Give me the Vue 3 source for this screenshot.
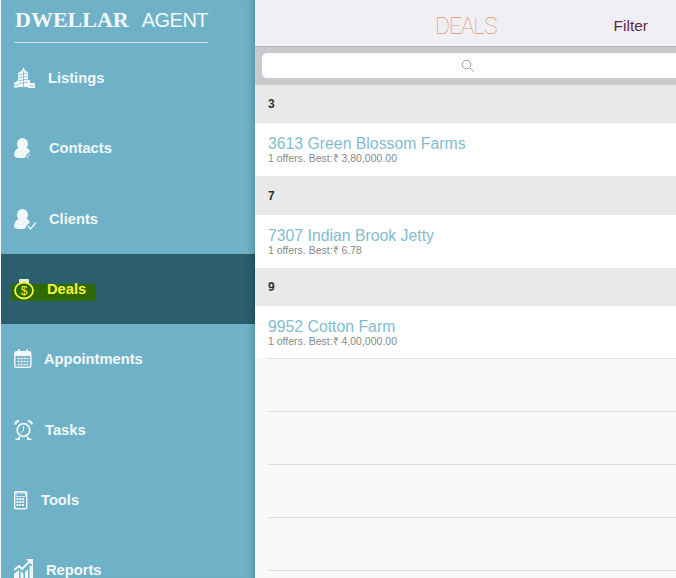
<script setup>
const menu = [
  { name: 'Listings', icon: 'listings', w: 22, gap: 12 },
  { name: 'Contacts', icon: 'contacts', w: 18, gap: 17 },
  { name: 'Clients', icon: 'clients', w: 23, gap: 12 },
  { name: 'Deals', icon: 'deals', w: 20, gap: 13, active: true },
  { name: 'Appointments', icon: 'appointments', w: 18, gap: 12 },
  { name: 'Tasks', icon: 'tasks', w: 19, gap: 12 },
  { name: 'Tools', icon: 'tools', w: 14, gap: 13 },
  { name: 'Reports', icon: 'reports', w: 19, gap: 13 },
]

const sections = [
  { label: '3', title: '3613 Green Blossom Farms', sub: '1 offers. Best:₹ 3,80,000.00' },
  { label: '7', title: '7307 Indian Brook Jetty', sub: '1 offers. Best:₹ 6.78' },
  { label: '9', title: '9952 Cotton Farm', sub: '1 offers. Best:₹ 4,00,000.00' },
]
</script>

<template>
  <div class="app">
    <aside class="sidebar">
      <div class="brand">
        <span class="brand-main">DWELLAR</span>
        <span class="brand-sub">AGENT</span>
      </div>
      <nav>
        <div v-for="item in menu" :key="item.name" class="menu-item" :class="{ active: item.active }">
          <div class="menu-inner" :style="{ gap: item.gap + 'px' }">
            <svg :width="item.w" height="22" :viewBox="`0 0 ${item.w} 22`" class="icon">
              <g v-if="item.icon === 'listings'" fill="currentColor">
                <path d="M4 20V6l4-2.500L9.500 0 11 3.500l3 1.500v15z" />
                <path d="M0 20.500V16l4-2.500v7zM14 13h2v3h5v5h-7z" />
                <path d="M4.500 8l9-2M4.500 11l9-2M4.500 14l9-2M4.500 17l9-2M9.500 4v16" stroke="#6fb2c8" stroke-width=".7" />
                <path d="M0 18h4M16 18.500h3" stroke="#6fb2c8" stroke-width=".7" />
              </g>
              <g v-else-if="item.icon === 'contacts'" fill="currentColor">
                <ellipse cx="8.500" cy="7" rx="5.500" ry="6" />
                <path d="M0 19c0-5 3-8 6-9h5c3 1 5 3 5 5-2 .5-4 2.500-4.500 5.500C8 21.500 3 21.500 0 19z" />
                <path d="M13.500 21c0-2 1-3.500 2.500-3.500" fill="none" stroke="currentColor" stroke-width="1" />
              </g>
              <g v-else-if="item.icon === 'clients'" fill="currentColor">
                <ellipse cx="8.500" cy="7" rx="5.500" ry="6" />
                <path d="M0 19c0-5 3-8 6-9h5c3 1 5 3 5 5-2 .5-4 2.500-4.500 5.500C8 21.500 3 21.500 0 19z" />
                <path d="M14 18l2.500 3 5.500-6.500" fill="none" stroke="currentColor" stroke-width="1.300" />
              </g>
              <g v-else-if="item.icon === 'deals'">
                <rect x="5" y="1" width="10" height="4" rx="1" fill="#e8ecdc" />
                <ellipse cx="10" cy="12.500" rx="9" ry="8" fill="none" stroke="currentColor" stroke-width="1.800" />
                <text x="10" y="17" text-anchor="middle" class="dollar" fill="currentColor">$</text>
              </g>
              <g v-else-if="item.icon === 'appointments'">
                <rect x=".8" y="3.800" width="16" height="15.500" rx="1.500" fill="none" stroke="currentColor" stroke-width="1.500" />
                <path d="M1 4h16v4H1zM4 1.500h2v3.500H4zM12 1.500h2v3.500h-2z" fill="currentColor" />
                <path d="M3.500 10.500h11M3.500 13.500h11M3.500 16.500h11" stroke="currentColor" stroke-width="1.600" stroke-dasharray="2 1" />
              </g>
              <g v-else-if="item.icon === 'tasks'" fill="none" stroke="currentColor">
                <circle cx="9.500" cy="11" r="6.300" stroke-width="1.700" />
                <path d="M9.500 7v4.500l-2.500 2" stroke-width="1" />
                <path d="M1 5.500c.5-2 2-3.500 4-3.500M18 5.500c-.5-2-2-3.500-4-3.500" stroke-width="2.200" />
                <path d="M4 20l2-2.500M15 20l-2-2.500M1.500 20.300h4.500M13 20.300h4.500" stroke-width="1.400" />
              </g>
              <g v-else-if="item.icon === 'tools'">
                <rect x=".7" y="2.700" width="12" height="17" rx="1" fill="none" stroke="currentColor" stroke-width="1.400" />
                <path d="M2 4h9.500v3.500H2z" fill="none" stroke="currentColor" stroke-width=".8" />
                <path d="M2.500 10h8M2.500 13h8M2.500 16h8" stroke="currentColor" stroke-width="1.800" stroke-dasharray="2 .8" />
              </g>
              <g v-else fill="currentColor">
                <path d="M0 11l5-4 3 3 7-7" fill="none" stroke="currentColor" stroke-width="2" />
                <path d="M12 0h7v7z" />
                <path d="M0 15l5-4v10H0zM6.500 12l3 2.500V21h-3zM11 13l3-3v11h-3zM15.500 7H19v14h-3.500z" />
              </g>
            </svg>
            <span class="menu-label">{{ item.name }}</span>
          </div>
        </div>
      </nav>
    </aside>

    <main class="content">
      <header class="topbar">
        <span class="title">DEALS</span>
        <span class="filter">Filter</span>
      </header>
      <div class="search">
        <div class="search-input">
          <svg width="14" height="14" viewBox="0 0 14 14" fill="none" stroke="#8e8e93" stroke-width=".9">
            <circle cx="5.500" cy="5.500" r="4.300" />
            <path d="M8.600 8.600l4.200 4.200" />
          </svg>
        </div>
      </div>
      <section v-for="s in sections" :key="s.label">
        <div class="section-head">{{ s.label }}</div>
        <div class="deal-row">
          <div class="deal-title">{{ s.title }}</div>
          <div class="deal-sub">{{ s.sub }}</div>
        </div>
      </section>
      <div class="row-line"></div>
      <div v-for="n in 5" :key="n" class="empty-row"></div>
    </main>
  </div>
</template>

<style>
html, body {
  margin: 0;
  overflow: hidden;
}
</style>

<style scoped>
.app {
  display: flex;
  width: 676px;
  height: 578px;
  overflow: hidden;
  background: #f9f9f9;
  font-family: "Liberation Sans", Arial, sans-serif;
}

.sidebar {
  flex: none;
  width: 254px;
  margin-left: 1px;
  background: #6fb2c8;
  box-shadow: inset -8px 0 7px -6px rgba(40, 90, 105, 0.4);
  color: #f2f8fa;
}

.brand {
  display: flex;
  align-items: baseline;
  gap: 13px;
  height: 43px;
  box-sizing: border-box;
  width: 194px;
  margin-left: 13px;
  padding: 7px 0 0 1px;
  border-bottom: 1px solid #cfe5ec;
  white-space: nowrap;
}

.brand-main {
  font-family: "Liberation Serif", "Times New Roman", serif;
  font-weight: 700;
  font-size: 22px;
}

.brand-sub {
  font-size: 20px;
  letter-spacing: -0.5px;
}

.menu-item {
  height: 70.3px;
  display: flex;
  align-items: center;
  padding-left: 13px;
  box-sizing: border-box;
}

.menu-item.active {
  background: #2b5f6d;
  box-shadow: inset -8px 0 7px -6px rgba(15, 45, 55, 0.4);
  color: #f2f53a;
}

.menu-inner {
  display: flex;
  align-items: center;
}

.active .menu-inner {
  position: relative;
}

.active .menu-inner::before {
  content: "";
  position: absolute;
  left: -3px;
  right: -9px;
  top: 6px;
  height: 17px;
  background: #2f6a00;
  border-radius: 2px;
}

.icon,
.menu-label {
  position: relative;
}

.menu-label {
  font-weight: 700;
  font-size: 14.7px;
  line-height: 18px;
}

.dollar {
  font-family: "Liberation Sans", sans-serif;
  font-size: 12px;
}

.content {
  flex: 1;
  min-width: 0;
}

.topbar {
  display: flex;
  align-items: center;
  height: 47px;
  padding-top: 6px;
  background: #efeff4;
  border-bottom: 1px solid #b5b5ba;
  box-sizing: border-box;
}

.title {
  margin-left: 180px;
  font-family: Roboto, "Liberation Sans", sans-serif;
  font-weight: 100;
  font-size: 23px;
  letter-spacing: -1.2px;
  color: #e5996c;
}

.filter {
  margin-left: auto;
  margin-right: 28px;
  font-size: 15.500px;
  color: #5c2a43;
}

.search {
  height: 38px;
  padding: 6px 0 7px 7px;
  box-sizing: border-box;
  background: #c9c9ce;
}

.search-input {
  height: 25px;
  background: #fff;
  border-radius: 5px 0 0 5px;
  display: flex;
  align-items: center;
  padding-left: 199px;
}

.section-head {
  height: 38px;
  padding-left: 13px;
  display: flex;
  align-items: center;
  background: #e9e9e9;
  font-size: 12px;
  font-weight: 700;
  color: #2f2f2f;
}

section:nth-of-type(2) .section-head {
  height: 39px;
}

.deal-row {
  height: 53px;
  box-sizing: border-box;
  padding: 12px 0 0 13px;
  background: #fff;
}

section:last-of-type .deal-row {
  height: 52px;
}

.deal-title {
  font-size: 15.800px;
  line-height: 17px;
  color: #84bccf;
}

.deal-sub {
  margin-top: 1px;
  font-size: 10.500px;
  line-height: 11px;
  color: #8a8a8a;
}

.row-line {
  height: 1px;
  margin-left: 13px;
  background: #dcdcdc;
}

.empty-row {
  height: 53px;
  box-sizing: border-box;
  margin-left: 13px;
  border-bottom: 1px solid #dcdcdc;
}
</style>
